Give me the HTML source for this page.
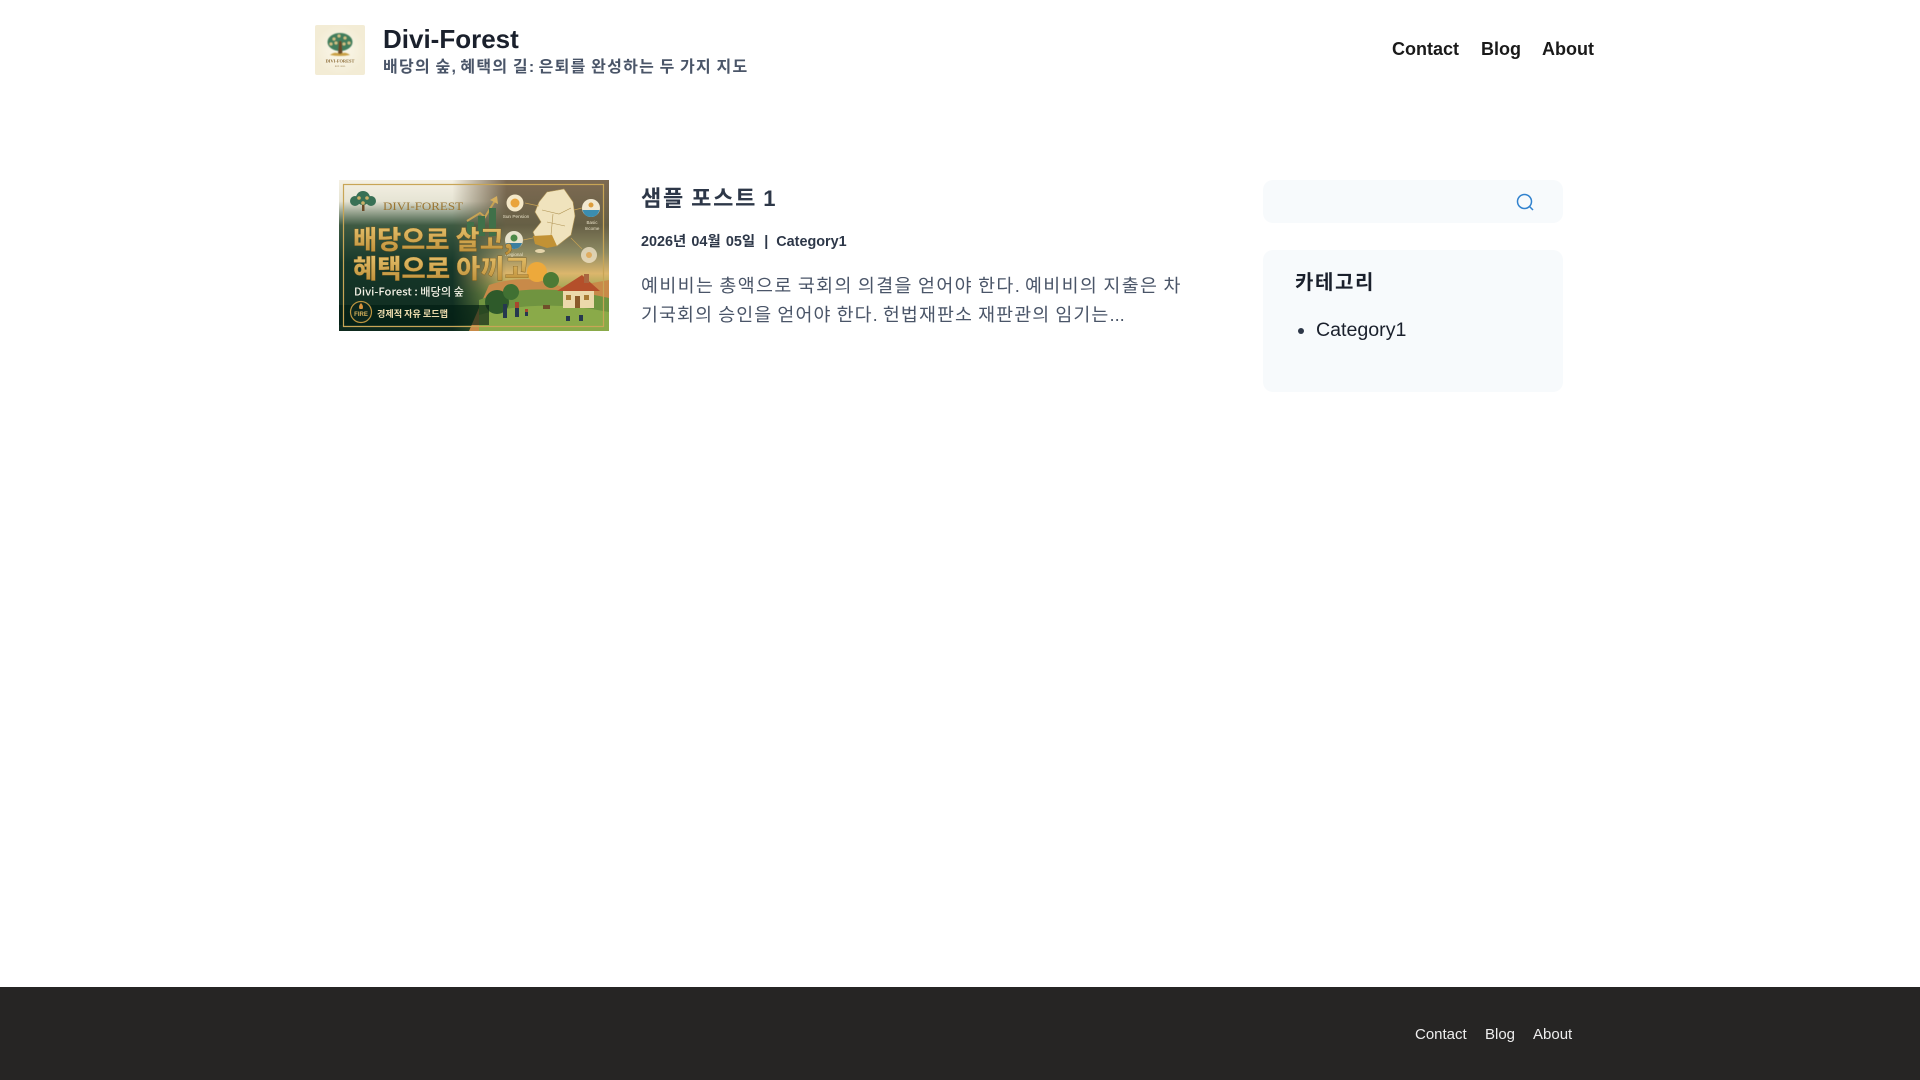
<!DOCTYPE html>
<html>
<head>
<meta charset="utf-8">
<title>Divi-Forest</title>
<style>
html,body{margin:0;padding:0;background:#fff}
body{width:1920px;height:1080px;position:relative;overflow:hidden;font-family:"Liberation Sans","Noto Sans CJK KR",sans-serif;color:#1a202c}
.a{position:absolute;white-space:nowrap;margin:0}
a{color:inherit;text-decoration:none}
.k{letter-spacing:.08em}
.k1{letter-spacing:.076em}
.k2{letter-spacing:.06em}
</style>
</head>
<body>
<svg class="a" style="left:315px;top:25px;border-radius:2px" width="50" height="50" viewBox="0 0 50 50">
<defs><radialGradient id="lb"><stop offset="0" stop-color="#fbf8ec"/><stop offset="1" stop-color="#f3ecd5"/></radialGradient><filter id="lf" x="-5%" y="-5%" width="110%" height="110%"><feGaussianBlur stdDeviation=".4"/></filter></defs>
<rect width="50" height="50" fill="url(#lb)"/>
<g filter="url(#lf)">
<ellipse cx="25" cy="17" rx="12.500" ry="9" fill="#3f7d5b"/>
<g fill="#d7c486"><circle cx="19" cy="14" r="1.500"/><circle cx="24" cy="11" r="1.500"/><circle cx="30" cy="13" r="1.500"/><circle cx="16" cy="19" r="1.500"/><circle cx="21" cy="18" r="1.500"/><circle cx="29" cy="19" r="1.500"/><circle cx="34" cy="18" r="1.500"/></g>
<path d="M24 16h2.500l1 13h-4.500Z" fill="#6b4a26"/>
<path d="M15 30q5-4 10-1q5-3 10 1q-10 2-20 0Z" fill="#c9a045"/>
</g>
<text x="25" y="37.500" text-anchor="middle" font-family="Liberation Serif" font-weight="bold" font-size="4.400" fill="#8a6a35">DIVI-FOREST</text>
<text x="25" y="42" text-anchor="middle" font-family="Liberation Serif" font-size="2.500" fill="#8a6a35">EST. 2025</text>
</svg>
<div class="a" style="left:383px;top:24px;font-size:26px;font-weight:700;line-height:30px;color:#1a202c">Divi-Forest</div>
<div class="a" style="left:383px;top:58px;font-size:16px;font-weight:700;line-height:20px;color:#4a5568"><span class="k">배당의</span> <span class="k">숲</span>, <span class="k">혜택의</span> <span class="k">길</span>: <span class="k">은퇴를</span> <span class="k">완성하는</span> <span class="k">두</span> <span class="k">가지</span> <span class="k">지도</span></div>
<div class="a" style="left:1392px;top:38px;font-size:18px;font-weight:700;line-height:22px;color:#1a1a1a"><a href="#">Contact</a></div>
<div class="a" style="left:1481px;top:38px;font-size:18px;font-weight:700;line-height:22px;color:#1a1a1a"><a href="#">Blog</a></div>
<div class="a" style="left:1542px;top:38px;font-size:18px;font-weight:700;line-height:22px;color:#1a1a1a"><a href="#">About</a></div>

<svg class="a" style="left:339px;top:180px" width="270" height="151" viewBox="0 0 270 151">
<defs>
<linearGradient id="l" x1="0" y1="0" x2="0" y2="1"><stop offset="0" stop-color="#f5f1e4"/><stop offset=".14" stop-color="#e6e4d4"/><stop offset=".3" stop-color="#3e5a42"/><stop offset=".55" stop-color="#17382a"/><stop offset="1" stop-color="#0e2a1e"/></linearGradient>
<linearGradient id="r" x1="0" y1="0" x2="0" y2="1"><stop offset="0" stop-color="#7d6a52"/><stop offset=".3" stop-color="#665f45"/><stop offset=".48" stop-color="#8d8a62"/><stop offset=".62" stop-color="#dcb66c"/><stop offset=".75" stop-color="#8ea24e"/><stop offset="1" stop-color="#4f7a35"/></linearGradient>
<linearGradient id="m" x1="0" y1="0" x2="1" y2="0"><stop offset=".42" stop-color="#000"/><stop offset=".62" stop-color="#fff"/></linearGradient>
<mask id="mk"><rect width="270" height="151" fill="url(#m)"/></mask>
<linearGradient id="g" x1="0" y1="0" x2="0" y2="1"><stop offset="0" stop-color="#edc974"/><stop offset="1" stop-color="#b88932"/></linearGradient>
<filter id="b" x="-5%" y="-5%" width="110%" height="110%"><feGaussianBlur stdDeviation=".35"/></filter>
</defs>
<rect width="270" height="151" fill="url(#l)"/>
<rect width="270" height="151" fill="url(#r)" mask="url(#mk)"/>
<g filter="url(#b)">
<path d="M150 105Q190 92 225 108L270 100V151H130Z" fill="#c88a4a"/>
<path d="M140 120Q190 100 270 118V151H140Z" fill="#6f9440"/>
<path d="M140 135Q200 118 270 132V151H140Z" fill="#8aaa4a"/>
<circle cx="198" cy="92" r="10" fill="#eda93a"/>
<circle cx="158" cy="122" r="12" fill="#2d5a2c"/><circle cx="172" cy="112" r="8" fill="#3f6f33"/><circle cx="212" cy="100" r="8" fill="#4d7a35"/>
<path d="M218 111L243 95L261 111Z" fill="#b4502c"/>
<rect x="224" y="111" width="31" height="17" fill="#ecd9ab"/><rect x="236" y="116" width="5" height="12" fill="#8b5a2b"/>
<rect x="227" y="115" width="5" height="5" fill="#a97c35"/><rect x="245" y="115" width="5" height="5" fill="#a97c35"/>
<rect x="245" y="94" width="5" height="9" fill="#a9663f"/>
<g fill="#26384f"><rect x="164" y="124" width="4" height="14"/><rect x="176" y="122" width="4" height="15"/><rect x="186" y="129" width="3" height="7"/><rect x="227" y="136" width="4" height="5"/><rect x="240" y="135" width="4" height="6"/></g>
<g fill="#a8462f"><rect x="176" y="122" width="4" height="6"/><rect x="186" y="129" width="3" height="3"/></g>
<rect x="204" y="125" width="7" height="4" fill="#70502c"/>
<rect x="0" y="125" width="150" height="20" fill="#061f14" opacity=".65"/>
<path d="M128 41L141 33L146 37L157 19" fill="none" stroke="#c7a253" stroke-width="2"/>
<path d="M151 20L158 16L159 24Z" fill="#d5ae5d"/>
<g fill="#3f7049"><rect x="128" y="42" width="7" height="14"/><rect x="139" y="36" width="7" height="20"/><rect x="150" y="28" width="7" height="28"/></g>
<path d="M208 12L225 9L234 22L236 36L232 55L218 66L198 62L194 52L202 42L196 32L200 22Z" fill="#f0e3bd" stroke="#b09455" stroke-width=".6"/>
<path d="M194 56L213 55L218 66L208 68L196 64Z" fill="#c29236"/>
<path d="M203 30L220 34L232 28M208 42L226 46M214 34L212 55" fill="none" stroke="#b09455" stroke-width=".6"/>
<ellipse cx="201" cy="71" rx="5" ry="2" fill="#e5d4aa"/>
<circle cx="176" cy="23" r="8.500" fill="#f4e8c8"/><circle cx="176" cy="23" r="4.500" fill="#e9a33a"/>
<circle cx="252" cy="28" r="9" fill="#f1e8d0"/><path d="M243.500 30h17q-2 7-8.500 7t-8.500-7Z" fill="#3b8db0"/><circle cx="252" cy="25" r="2.500" fill="#dc9c3a"/>
<circle cx="175" cy="60" r="9" fill="#e8e3cc"/><path d="M167 63h16q-2 6-8 6t-8-6Z" fill="#3b7fa0"/><circle cx="175" cy="58" r="3.500" fill="#4d8a48"/>
<circle cx="250" cy="75" r="8" fill="#efe2c6" opacity=".8"/><circle cx="250" cy="75" r="3" fill="#e0a24c" opacity=".8"/>
<path d="M186 23L200 26M235 30L243 28M184 60L194 58M232 58L243 69" stroke="#c7a253" stroke-width=".7" fill="none"/>
<text x="177" y="38" text-anchor="middle" font-family="Liberation Sans" font-size="4.700" fill="#e8e0c6">Sun Pension</text>
<text x="253" y="44" text-anchor="middle" font-family="Liberation Sans" font-size="4.500" fill="#e8e0c6">Basic</text>
<text x="253" y="50" text-anchor="middle" font-family="Liberation Sans" font-size="4.500" fill="#e8e0c6">Income</text>
<text x="175" y="76" text-anchor="middle" font-family="Liberation Sans" font-size="4.500" fill="#e8e0c6">Regional</text>
<rect x="23" y="20" width="2.500" height="11" fill="#6b4a26"/>
<g fill="#386f55"><circle cx="24" cy="18" r="7"/><circle cx="16" cy="21" r="5"/><circle cx="32" cy="21" r="5"/></g>
<g fill="#cdb168"><circle cx="20" cy="18" r="1.800"/><circle cx="28" cy="18" r="1.800"/><circle cx="24" cy="23" r="1.800"/></g>
<text x="44" y="30" font-family="Liberation Serif" font-size="11.500" fill="#9a7430" textLength="80" lengthAdjust="spacingAndGlyphs">DIVI-FOREST</text>
<text x="14" y="69" font-family="Noto Sans CJK KR" font-weight="900" font-size="26" fill="url(#g)" stroke="#6a4e18" stroke-width=".3" textLength="160" lengthAdjust="spacingAndGlyphs">배당으로 살고,</text>
<text x="14" y="98" font-family="Noto Sans CJK KR" font-weight="900" font-size="26" fill="url(#g)" stroke="#6a4e18" stroke-width=".3" textLength="176" lengthAdjust="spacingAndGlyphs">혜택으로 아끼고</text>
<text x="15" y="115.500" font-family="Noto Sans CJK KR" font-weight="500" font-size="11" fill="#f4f2e6" textLength="110" lengthAdjust="spacingAndGlyphs">Divi-Forest : 배당의 숲</text>
<circle cx="22" cy="132" r="10.500" fill="#10261a" stroke="#bd9540" stroke-width="1.200"/>
<path d="M22 123q3 3 1.500 6h-3q-1.500-3 1.500-6Z" fill="#d8923a"/>
<text x="22" y="136" text-anchor="middle" font-family="Liberation Sans" font-weight="700" font-size="6" fill="#d8b35c">FIRE</text>
<text x="38" y="137" font-family="Noto Sans CJK KR" font-weight="700" font-size="9" fill="#ecdcae" textLength="71" lengthAdjust="spacingAndGlyphs">경제적 자유 로드맵</text>
</g>
<rect x="4.500" y="4.500" width="260" height="142" fill="none" stroke="#c8a556" stroke-width="1.200"/>
</svg>

<div class="a" style="left:641px;top:185px;font-size:22px;font-weight:700;line-height:28px;color:#2d3748"><span class="k">샘플</span> <span class="k">포스트</span> 1</div>
<div class="a" style="left:641px;top:233px;font-size:14.400px;font-weight:700;line-height:18px;color:#2d3748">2026<span class="k">년</span> 04<span class="k">월</span> 05<span class="k">일</span> &nbsp;|&nbsp; Category1</div>
<div class="a" style="left:641px;top:271px;font-size:18.400px;line-height:29.440px;color:#4a5568"><span class="k1">예비비는</span> <span class="k1">총액으로</span> <span class="k1">국회의</span> <span class="k1">의결을</span> <span class="k1">얻어야</span> <span class="k1">한다</span>. <span class="k1">예비비의</span> <span class="k1">지출은</span> <span class="k1">차</span><br><span class="k2">기국회의</span> <span class="k2">승인을</span> <span class="k2">얻어야</span> <span class="k2">한다</span>. <span class="k2">헌법재판소</span> <span class="k2">재판관의</span> <span class="k2">임기는</span>...</div>

<div class="a" style="left:1263px;top:180px;width:300px;height:43px;background:#f7fafc;border-radius:10px"></div>
<svg class="a" style="left:1514px;top:192px" width="22" height="20" viewBox="0 0 22 20"><circle cx="10.500" cy="9.500" r="7" fill="none" stroke="#3182ce" stroke-width="1.500"/><path d="M15.500 14.500L19 18" stroke="#3182ce" stroke-width="1.500" fill="none"/></svg>
<div class="a" style="left:1263px;top:250px;width:300px;height:142px;background:#f7fafc;border-radius:10px"></div>
<div class="a" style="left:1295px;top:270px;font-size:20px;font-weight:700;line-height:26px;color:#1a202c"><span class="k">카테고리</span></div>
<div class="a" style="left:1298px;top:328px;width:6px;height:6px;border-radius:50%;background:#2d3748"></div>
<div class="a" style="left:1316px;top:319px;font-size:19.600px;line-height:22px;color:#1a202c">Category1</div>

<div class="a" style="left:0;top:987px;width:1920px;height:93px;background:#262524"></div>
<div class="a" style="left:1415px;top:1026px;font-size:15px;line-height:18px;color:#eee"><a href="#">Contact</a></div>
<div class="a" style="left:1485px;top:1026px;font-size:15px;line-height:18px;color:#eee"><a href="#">Blog</a></div>
<div class="a" style="left:1533px;top:1026px;font-size:15px;line-height:18px;color:#eee"><a href="#">About</a></div>
</body>
</html>
